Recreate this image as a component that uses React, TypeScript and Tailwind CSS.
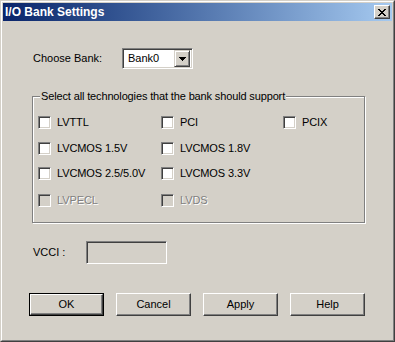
import React from "react";

const font = "font-['Liberation_Sans',Arial,sans-serif]";

const CheckBox = ({ label, disabled }: { label: string; disabled?: boolean }) => {
  return (
    <div className="flex items-center h-[13px]">
      <div
        className={`w-[13px] h-[13px] border border-t-[#808080] border-l-[#808080] border-r-white border-b-white shadow-[inset_1px_1px_0_#404040,inset_-1px_-1px_0_#d4d0c8] ${
          disabled ? "bg-[#d4d0c8]" : "bg-white"
        }`}
      />
      <span
        className={`ml-[6px] text-[11px] leading-none whitespace-nowrap tracking-[-0.1px] ${
          disabled ? "text-[#808080] [text-shadow:1px_1px_0_#fff]" : "text-black"
        }`}
      >
        {label}
      </span>
    </div>
  );
};

const Button = ({ label, isDefault }: { label: string; isDefault?: boolean }) => {
  if (isDefault) {
    return (
      <div className="w-[75px] h-[23px] border border-black">
        <div className="w-full h-full flex items-center justify-center text-[11px] border border-t-white border-l-white border-r-[#404040] border-b-[#404040] shadow-[inset_-1px_-1px_0_#808080]">
          {label}
        </div>
      </div>
    );
  }
  return (
    <div className="w-[75px] h-[23px] flex items-center justify-center text-[11px] border border-t-white border-l-white border-r-[#404040] border-b-[#404040] shadow-[inset_-1px_-1px_0_#808080]">
      {label}
    </div>
  );
};

const TitleBar = () => {
  return (
    <div className="flex items-center justify-between h-[18px] pl-[2px] pr-[2px] bg-gradient-to-r from-[#0a246a] to-[#a6caf0]">
      <span className="text-white font-bold text-[12px] leading-none">I/O Bank Settings</span>
      <div className="w-[16px] h-[14px] flex items-center justify-center bg-[#d4d0c8] border border-t-white border-l-white border-r-[#404040] border-b-[#404040] shadow-[inset_-1px_-1px_0_#808080]">
        <svg width="8" height="7" viewBox="0 0 8 7" shapeRendering="crispEdges">
          <path d="M0 0h2v1h-2zM6 0h2v1h-2zM1 1h2v1h-2zM5 1h2v1h-2zM2 2h4v1h-4zM3 3h2v1h-2zM2 4h4v1h-4zM1 5h2v1h-2zM5 5h2v1h-2zM0 6h2v1h-2zM6 6h2v1h-2z" fill="#000" />
        </svg>
      </div>
    </div>
  );
};

const App = () => {
  return (
    <div className={`w-[395px] h-[342px] bg-[#d4d0c8] border border-t-[#d4d0c8] border-l-[#d4d0c8] border-r-[#404040] border-b-[#404040] ${font}`}>
      <div className="w-full h-full border border-t-white border-l-white border-r-[#808080] border-b-[#808080] p-[1px] flex flex-col">
        <TitleBar />

        <div className="flex items-center h-[21px] mt-[27px] pl-[30px]">
          <span className="w-[89px] text-[11px]">Choose Bank:</span>
          <div className="w-[71px] h-[21px] bg-white border border-t-[#808080] border-l-[#808080] border-r-white border-b-white shadow-[inset_1px_1px_0_#404040,inset_-1px_-1px_0_#d4d0c8] flex items-center justify-between p-[2px]">
            <span className="text-[11px] pl-[3px] leading-none">Bank0</span>
            <div className="w-[16px] h-[17px] bg-[#d4d0c8] flex items-center justify-center border border-t-[#d4d0c8] border-l-[#d4d0c8] border-r-[#404040] border-b-[#404040] shadow-[inset_1px_1px_0_#fff,inset_-1px_-1px_0_#808080]">
              <svg width="7" height="4" viewBox="0 0 7 4" shapeRendering="crispEdges">
                <path d="M0 0h7v1h-7zM1 1h5v1h-5zM2 2h3v1h-3zM3 3h1v1h-1z" fill="#000" />
              </svg>
            </div>
          </div>
        </div>

        <div className="relative ml-[29px] mt-[27px] w-[333px] h-[127px] border border-[#808080] shadow-[inset_1px_1px_0_#fff,1px_1px_0_#fff] pt-[19px] pl-[5px]">
          <span className="absolute left-[7px] top-[-7px] px-[1px] bg-[#d4d0c8] text-[11px] leading-[13px] whitespace-nowrap tracking-[-0.14px]">
            Select all technologies that the bank should support
          </span>
          <div className="grid grid-cols-[123px_122px_1fr]">
            <CheckBox label="LVTTL" />
            <CheckBox label="PCI" />
            <CheckBox label="PCIX" />
          </div>
          <div className="grid grid-cols-[123px_122px_1fr] mt-[13px]">
            <CheckBox label="LVCMOS 1.5V" />
            <CheckBox label="LVCMOS 1.8V" />
          </div>
          <div className="grid grid-cols-[123px_122px_1fr] mt-[12px]">
            <CheckBox label="LVCMOS 2.5/5.0V" />
            <CheckBox label="LVCMOS 3.3V" />
          </div>
          <div className="grid grid-cols-[123px_122px_1fr] mt-[14px]">
            <CheckBox label="LVPECL" disabled />
            <CheckBox label="LVDS" disabled />
          </div>
        </div>

        <div className="flex items-center h-[23px] mt-[18px] pl-[30px]">
          <span className="w-[53px] text-[11px]">VCCI :</span>
          <div className="w-[81px] h-[23px] bg-[#d4d0c8] border border-t-[#808080] border-l-[#808080] border-r-white border-b-white shadow-[inset_1px_1px_0_#404040,inset_-1px_-1px_0_#d4d0c8]" />
        </div>

        <div className="flex gap-[12px] mt-[29px] pl-[26px]">
          <Button label="OK" isDefault />
          <Button label="Cancel" />
          <Button label="Apply" />
          <Button label="Help" />
        </div>
      </div>
    </div>
  );
};

export default App;
